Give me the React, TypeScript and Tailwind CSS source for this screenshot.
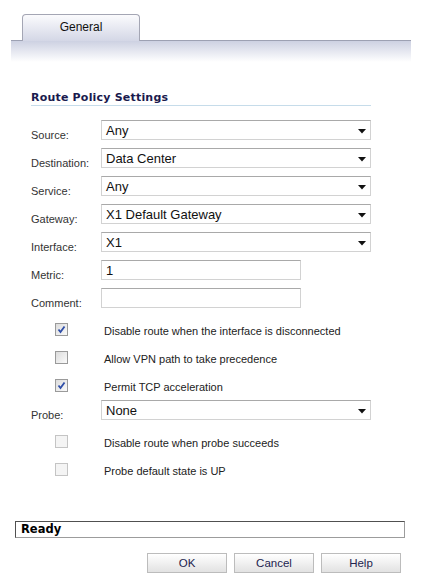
import React from 'react'

const labelFont = { fontFamily: '"Liberation Sans", Arial, sans-serif' }

const Arrow = () => (
  <svg width="8" height="5" viewBox="0 0 8 5" className="absolute right-[4px] top-[8px]">
    <path d="M0 0 L8 0 L4 4.5 Z" fill="#111" />
  </svg>
)

const FieldLabel: React.FC<{ text: string }> = ({ text }) => (
  <div className="w-[70px] shrink-0 pt-[8px] text-[11px] leading-[14px] text-[#333]">{text}</div>
)

const SelectRow: React.FC<{ label: string; value: string; className?: string }> = ({ label, value, className = '' }) => (
  <div className={`flex h-[20px] ${className}`}>
    <FieldLabel text={label} />
    <div className="relative w-[270px] h-[20px] border border-[#d2d2d2] border-t-[#a9a9a9] bg-white pl-[4px] pt-px text-[13px] leading-[18px] text-[#111]">
      {value}
      <Arrow />
    </div>
  </div>
)

const InputRow: React.FC<{ label: string; value: string; className?: string }> = ({ label, value, className = '' }) => (
  <div className={`flex h-[20px] ${className}`}>
    <FieldLabel text={label} />
    <div className="w-[200px] h-[20px] border border-[#d2d2d2] border-t-[#a9a9a9] bg-white pl-[4px] pt-px text-[13px] leading-[18px] text-[#111]">
      {value}
    </div>
  </div>
)

const CheckRow: React.FC<{ text: string; checked?: boolean; disabled?: boolean; className?: string }> = ({
  text,
  checked = false,
  disabled = false,
  className = ''
}) => (
  <div className={`flex items-center h-[20px] ${className}`}>
    <div
      className={`ml-[24px] w-[13px] h-[13px] shrink-0 border ${
        disabled ? 'border-[#c4c4c4] bg-[#f4f4f4]' : 'border-[#9a9a9a] bg-gradient-to-br from-[#dcdcdc] to-[#fafafa]'
      } flex items-center justify-center`}
    >
      {checked && (
        <svg width="9" height="9" viewBox="0 0 9 9">
          <path d="M1.5 4.5 L3.5 7 L7.5 1.5" stroke="#2f4ea8" strokeWidth="1.8" fill="none" />
        </svg>
      )}
    </div>
    <div className="ml-[36px] pt-[3px] text-[11px] leading-[14px] text-[#222]">{text}</div>
  </div>
)

export default function App() {
  return (
    <div className="w-[422px] h-[580px] bg-white overflow-hidden" style={labelFont}>
      {/* Tab strip */}
      <div className="pt-[14px]">
        <div className="pl-[22px] flex">
          <div className="relative z-10 -mb-px w-[118px] h-[27px] rounded-t-[4px] border border-b-0 border-[#a4a6b4] bg-gradient-to-b from-[#fbfbfd] to-[#d4d7e6] text-center text-[12px] leading-[24px] text-[#111]">
            General
          </div>
        </div>
        <div className="mx-[11px] h-[22px] border-t border-[#9da1b3] bg-gradient-to-b from-[#cdd1e2] to-white" />
      </div>

      {/* Section heading */}
      <div className="ml-[31px] mt-[28px] w-[340px] border-b border-[#c6dcea]">
        <div
          className="text-[11px] leading-[14px] pt-px font-bold tracking-[0.2px] text-[#1a1a4e]"
          style={{ fontFamily: '"DejaVu Sans", Verdana, sans-serif' }}
        >
          Route Policy Settings
        </div>
      </div>

      {/* Form */}
      <div className="pl-[31px] flex flex-col">
        <SelectRow label="Source:" value="Any" className="mt-[14px]" />
        <SelectRow label="Destination:" value="Data Center" className="mt-[8px]" />
        <SelectRow label="Service:" value="Any" className="mt-[8px]" />
        <SelectRow label="Gateway:" value="X1 Default Gateway" className="mt-[8px]" />
        <SelectRow label="Interface:" value="X1" className="mt-[8px]" />
        <InputRow label="Metric:" value="1" className="mt-[8px]" />
        <InputRow label="Comment:" value="" className="mt-[8px]" />
        <CheckRow text="Disable route when the interface is disconnected" checked className="mt-[11px]" />
        <CheckRow text="Allow VPN path to take precedence" className="mt-[8px]" />
        <CheckRow text="Permit TCP acceleration" checked className="mt-[8px]" />
        <SelectRow label="Probe:" value="None" className="mt-[5px]" />
        <CheckRow text="Disable route when probe succeeds" disabled className="mt-[11px]" />
        <CheckRow text="Probe default state is UP" disabled className="mt-[8px]" />
      </div>

      {/* Status */}
      <div className="ml-[15px] mt-[42px] w-[390px] h-[17px] border border-[#9c9c9c] border-t-[#505050] border-l-[#505050] pl-[5px]">
        <div
          className="text-[11.5px] leading-[15px] font-bold text-black"
          style={{ fontFamily: '"DejaVu Sans", Verdana, sans-serif' }}
        >
          Ready
        </div>
      </div>

      {/* Buttons */}
      <div className="flex gap-[7px] pl-[147px] mt-[15px]">
        {['OK', 'Cancel', 'Help'].map((b) => (
          <div
            key={b}
            className="w-[80px] h-[20px] border border-[#bcbcbc] bg-gradient-to-b from-white to-[#e2e2e2] text-center text-[11.5px] leading-[18px] text-[#23234f]"
          >
            {b}
          </div>
        ))}
      </div>
    </div>
  )
}
